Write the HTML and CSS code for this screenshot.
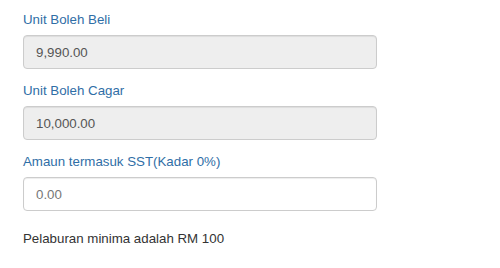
FILE: index.html
```html
<!DOCTYPE html>
<html>
<head>
<meta charset="utf-8">
<link rel="stylesheet" href="styles.css">
</head>
<body>
<form class="form">
  <div class="group">
    <label class="label">Unit Boleh Beli</label>
    <input class="control" type="text" value="9,990.00" readonly>
  </div>
  <div class="group">
    <label class="label">Unit Boleh Cagar</label>
    <input class="control" type="text" value="10,000.00" readonly>
  </div>
  <div class="group">
    <label class="label">Amaun termasuk SST(Kadar 0%)</label>
    <input class="control editable" type="text" placeholder="0.00">
  </div>
  <p class="help">Pelaburan minima adalah RM 100</p>
</form>
</body>
</html>
```
FILE: styles.css
```css
html, body {
  margin: 0;
  padding: 0;
  background: #ffffff;
}
body {
  font-family: "Liberation Sans", Arial, sans-serif;
  font-size: 13.3px;
  color: #333333;
}
.form {
  width: 354px;
  padding: 10px 0 0 23px;
  display: flex;
  flex-direction: column;
}
.group {
  display: flex;
  flex-direction: column;
  margin-bottom: 12px;
}
.label {
  line-height: 20px;
  margin-bottom: 5px;
  color: #2f6ea6;
  font-weight: normal;
}
.control {
  box-sizing: border-box;
  height: 34px;
  width: 100%;
  padding: 6px 12px;
  border: 1px solid #cccccc;
  border-radius: 4px;
  background: #eeeeee;
  color: #555555;
  font-family: inherit;
  font-size: 13.3px;
  box-shadow: inset 0 1px 1px rgba(0,0,0,0.075);
  outline: none;
}
.editable {
  background: #ffffff;
}
.editable::placeholder {
  color: #777777;
  opacity: 1;
}
.help {
  margin: 6px 0 0;
  line-height: 20px;
  color: #333333;
}
```
